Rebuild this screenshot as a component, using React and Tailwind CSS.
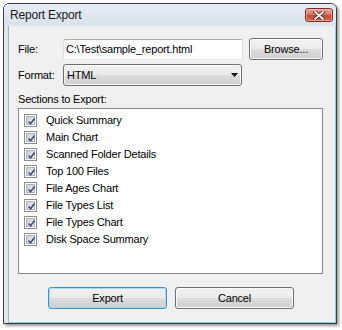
import React from 'react';

const sections = [
  'Quick Summary',
  'Main Chart',
  'Scanned Folder Details',
  'Top 100 Files',
  'File Ages Chart',
  'File Types List',
  'File Types Chart',
  'Disk Space Summary',
];

const btnBg = 'bg-[linear-gradient(#f2f2f2,#ebebeb_50%,#dddddd_50%,#cfcfcf)]';

function Check(){
  return (
    <div className="w-[13px] h-[13px] border border-[#8e8f8f] bg-white p-[1px] shrink-0">
      <div className="w-full h-full bg-[linear-gradient(135deg,#c8ccd2,#f4f4f5)] border border-[#b0b4ba] relative">
        <svg width="11" height="11" viewBox="0 0 11 11" className="absolute -left-[1px] -top-[1px]">
          <path d="M2.5 5.5 L4.6 7.8 L8.6 2.6" fill="none" stroke="#3e4f86" strokeWidth="1.7" />
        </svg>
      </div>
    </div>
  );
}

function CloseButton(){
  return (
    <div className="w-[28px] h-[14px] rounded-[3px] border border-[#7a2d25] bg-[linear-gradient(#e9a99b,#d7786a_45%,#c24a38_55%,#d2705a)] flex items-center justify-center shadow-[inset_0_0_0_1px_rgba(255,210,200,0.5)]">
      <svg width="12" height="9" viewBox="0 0 12 9">
        <path d="M2 1 L10 8 M10 1 L2 8" stroke="#5a1f18" strokeWidth="3.4" strokeLinecap="square" />
        <path d="M2 1 L10 8 M10 1 L2 8" stroke="#ffffff" strokeWidth="1.8" strokeLinecap="square" />
      </svg>
    </div>
  );
}

export default function App(){
  return (
    <div className="w-[342px] h-[330px] bg-white pt-[3px] pl-[3px] font-['Liberation_Sans',Arial,sans-serif] text-[11px] tracking-[-0.2px] text-black">
      <div className="w-[334px] h-[321px] border border-[#3b3f44] rounded-t-[6px] bg-[#dfe6ee] flex flex-col shadow-[2px_2px_3px_rgba(0,0,0,0.4)] overflow-hidden">
        <div className="h-[22px] flex items-start justify-between pl-[6px] pr-[3px] pt-[4px] bg-[linear-gradient(#e6edf5,#d9e2ec)] shrink-0">
          <div className="text-[12px] leading-[14px] text-[#1a1a1a]">Report Export</div>
          <CloseButton />
        </div>
        <div className="flex-1 flex">
          <div className="w-[4px] bg-[#dfe6ee] shrink-0" />
          <div className="flex-1 flex flex-col border-l border-[#a9b3bf] border-r border-r-[#86cdee] border-b border-b-[#86cdee] bg-[#f0f0f0] pt-[12px] pl-[9px]">
            <div className="flex items-center h-[22px]">
              <div className="w-[45px]">File:</div>
              <div className="w-[180px] h-[21px] bg-white border border-[#dbdfe6] border-t-[#abadb3] border-b-[#e3e9ef] rounded-[2px] flex items-center pl-[2px]">C:\Test\sample_report.html</div>
              <div className={`ml-[6px] w-[74px] h-[22px] border border-[#707070] rounded-[3px] ${btnBg} shadow-[inset_0_0_0_1px_#fbfbfb] flex items-center justify-center`}>Browse...</div>
            </div>
            <div className="flex items-center h-[22px] mt-[4px]">
              <div className="w-[45px]">Format:</div>
              <div className={`w-[179px] h-[22px] border border-[#707070] rounded-[3px] ${btnBg} shadow-[inset_0_0_0_1px_#fbfbfb] flex items-center justify-between pl-[3px] pr-[3px]`}>
                <span>HTML</span>
                <svg width="7" height="4" viewBox="0 0 7 4"><path d="M0 0 H7 L3.5 4 Z" fill="#000" /></svg>
              </div>
            </div>
            <div className="mt-[7px] leading-[13px]">Sections to Export:</div>
            <div className="mt-[2px] w-[305px] h-[166px] bg-white border border-[#828790] pt-[3px] pl-[5px]">
              {sections.map(s => (
                <div key={s} className="h-[17px] flex items-center gap-[9px]">
                  <Check />
                  <span>{s}</span>
                </div>
              ))}
            </div>
            <div className="flex mt-[13px] pl-[30px] gap-[8px]">
              <div className={`w-[119px] h-[22px] border border-[#3c8fd0] rounded-[3px] ${btnBg} shadow-[inset_0_0_0_1px_#a6def8] flex items-center justify-center`}>Export</div>
              <div className={`w-[119px] h-[22px] border border-[#707070] rounded-[3px] ${btnBg} shadow-[inset_0_0_0_1px_#fbfbfb] flex items-center justify-center`}>Cancel</div>
            </div>
          </div>
        </div>
      </div>
    </div>
  );
}
